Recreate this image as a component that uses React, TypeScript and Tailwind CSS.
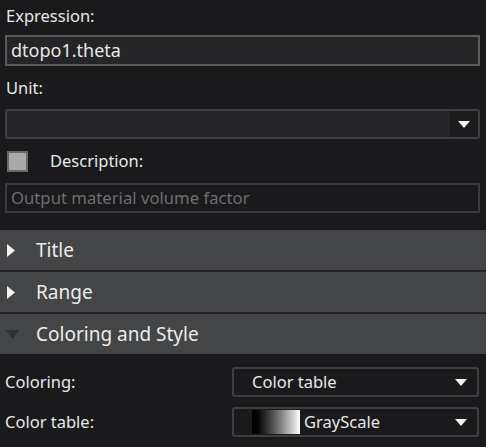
const FONT = { fontFamily: '"Noto Sans", "Open Sans", sans-serif' };

function DownArrow() {
  return (
    <svg width="12" height="7" viewBox="0 0 12 7" className="block">
      <path d="M0 0 L12 0 L6 7 Z" fill="#f0f0f0" />
    </svg>
  );
}

function Section({ label, open }: { label: string; open?: boolean }) {
  return (
    <div className="flex h-[40px] items-center bg-[#444547]">
      <div className="flex w-[36px] items-center pl-[6px]">
        {open ? (
          <svg width="13" height="9" viewBox="0 0 13 9">
            <path d="M0 0 L13 0 L6.5 9 Z" fill="#2e2f31" />
          </svg>
        ) : (
          <svg width="8" height="13" viewBox="0 0 8 13" className="ml-[1px]">
            <path d="M0 0 L8 6.5 L0 13 Z" fill="#f2f2f2" />
          </svg>
        )}
      </div>
      <span className="text-[19px] text-[#ececec]">{label}</span>
    </div>
  );
}

function Combo({ children }: { children: React.ReactNode }) {
  return (
    <div className="flex h-[30px] w-[247px] items-center rounded-[3px] border-2 border-[#3d3d3f] bg-[#1a1a1c] pr-[10px]">
      <div className="flex flex-1 items-center">{children}</div>
      <DownArrow />
    </div>
  );
}

export default function App() {
  return (
    <div className="h-[447px] w-[486px] overflow-hidden bg-[#1a1a1c] text-[#e8e8e8]" style={FONT}>
      <div className="px-[5px] pr-[6px]">
        <div className="pt-[4px] pl-[1px] text-[16.5px] leading-[24px]">Expression:</div>
        <div className="mt-[7px] flex h-[31px] items-center border-2 border-[#5b5b5b] bg-[#252527] pl-[4px] text-[18px]">
          dtopo1.theta
        </div>
        <div className="mt-[10px] pl-[1px] text-[16.5px] leading-[24px]">Unit:</div>
        <div className="mt-[9px] flex h-[30px] rounded-[3px] border-2 border-[#3f3f41] bg-[#252527]">
          <div className="flex-1" />
          <div className="flex w-[28px] items-center justify-center bg-[#1c1c1e]">
            <DownArrow />
          </div>
        </div>
        <div className="mt-[12px] flex h-[21px] items-center">
          <div className="ml-[2px] h-[21px] w-[21px] border-2 border-[#6a6a6a] bg-[#a9a9a9]" />
          <span className="ml-[22px] text-[16.5px]">Description:</span>
        </div>
        <div className="mt-[11px] flex h-[30px] items-center border-2 border-[#3a3a3c] bg-[#1a1a1c] pl-[4px] text-[16.7px] text-[#6e6e70]">
          Output material volume factor
        </div>
      </div>

      <div className="mt-[17px] flex flex-col gap-[2px] bg-[#232325]">
        <Section label="Title" />
        <Section label="Range" />
        <Section label="Coloring and Style" open />
      </div>

      <div className="mt-[13px] flex flex-col gap-[10px] px-[5px] pr-[7px]">
        <div className="flex items-center justify-between">
          <span className="text-[16.5px]">Coloring:</span>
          <Combo>
            <span className="pl-[18px] text-[16.5px]">Color table</span>
          </Combo>
        </div>
        <div className="flex items-center justify-between">
          <span className="text-[16.5px]">Color table:</span>
          <Combo>
            <div className="ml-[18px] h-[24px] w-[48px] bg-gradient-to-r from-black to-white" />
            <span className="pl-[4px] text-[16.5px]">GrayScale</span>
          </Combo>
        </div>
      </div>
    </div>
  );
}
